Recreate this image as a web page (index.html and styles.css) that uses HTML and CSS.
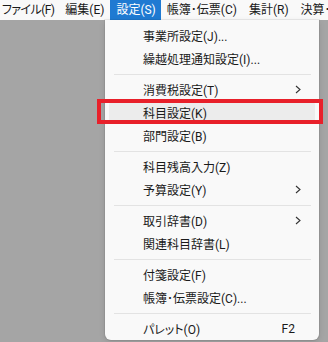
FILE: index.html
```html
<!DOCTYPE html>
<html lang="ja">
<head>
<meta charset="utf-8">
<link rel="stylesheet" href="styles.css">
</head>
<body>
<div class="app">
  <div class="menubar">
    <span class="mb-item first">ファイル(F)</span>
    <span class="mb-item">編集(E)</span>
    <span class="mb-item active">設定(S)</span>
    <span class="mb-item">帳簿･伝票(C)</span>
    <span class="mb-item">集計(R)</span>
    <span class="mb-item">決算･伝票</span>
  </div>
  <div class="workspace"></div>
  <div class="dropdown">
    <div class="row"><span class="label">事業所設定(J)...</span></div>
    <div class="row"><span class="label">繰越処理通知設定(I)...</span></div>
    <div class="sep"></div>
    <div class="row"><span class="label">消費税設定(T)</span><svg class="arrow" width="6" height="9" viewBox="0 0 6 9"><polyline points="1,1 5,4.5 1,8" fill="none" stroke="#333" stroke-width="1.1"/></svg></div>
    <div class="row hover"><span class="label">科目設定(K)</span></div>
    <div class="row"><span class="label">部門設定(B)</span></div>
    <div class="sep"></div>
    <div class="row"><span class="label">科目残高入力(Z)</span></div>
    <div class="row"><span class="label">予算設定(Y)</span><svg class="arrow" width="6" height="9" viewBox="0 0 6 9"><polyline points="1,1 5,4.5 1,8" fill="none" stroke="#333" stroke-width="1.1"/></svg></div>
    <div class="sep"></div>
    <div class="row"><span class="label">取引辞書(D)</span><svg class="arrow" width="6" height="9" viewBox="0 0 6 9"><polyline points="1,1 5,4.5 1,8" fill="none" stroke="#333" stroke-width="1.1"/></svg></div>
    <div class="row"><span class="label">関連科目辞書(L)</span></div>
    <div class="sep"></div>
    <div class="row"><span class="label">付箋設定(F)</span></div>
    <div class="row"><span class="label">帳簿･伝票設定(C)...</span></div>
    <div class="sep"></div>
    <div class="row"><span class="label">パレット(O)</span><span class="key">F2</span></div>
  </div>
  <div class="callout"></div>
</div>
</body>
</html>
```
FILE: styles.css
```css
html, body {
  margin: 0;
  padding: 0;
}
body {
  width: 328px;
  height: 342px;
  overflow: hidden;
  font-family: Roboto, "Noto Sans CJK JP", "Noto Sans", sans-serif;
  font-size: 12px;
  font-feature-settings: "palt";
  color: #1a1a1a;
}
.app {
  position: relative;
  width: 328px;
  height: 342px;
  display: flex;
  flex-direction: column;
}
.menubar {
  height: 20px;
  background: #f9f9f9;
  display: flex;
  align-items: stretch;
  white-space: nowrap;
  overflow: hidden;
}
.mb-item {
  display: flex;
  align-items: center;
  padding: 0 6px;
  line-height: 20px;
  flex-shrink: 0;
}
.mb-item.first {
  padding-left: 2px;
  padding-right: 5px;
  letter-spacing: -0.6px;
}
.mb-item.active {
  padding: 0 5px 0 6px;
  background: #1f7ad2;
  color: #ffffff;
}
.workspace {
  flex: 1;
  background: #a5a5a5;
}
.dropdown {
  position: absolute;
  left: 105px;
  top: 20px;
  width: 214px;
  height: 320px;
  box-sizing: border-box;
  padding-top: 4px;
  background: #f9f9f9;
  border-radius: 0 0 6px 6px;
  box-shadow: 0 0 0 1px rgba(0,0,0,0.06), 0 2px 6px rgba(0,0,0,0.12);
  display: flex;
  flex-direction: column;
}
.row {
  height: 23px;
  margin: 0 4px;
  padding: 0 14px 0 34px;
  border-radius: 4px;
  display: flex;
  align-items: center;
  justify-content: space-between;
  flex-shrink: 0;
}
.row.hover {
  background: #ececec;
}
.arrow {
  display: block;
}
.key {
  margin-right: 6px;
}
.sep {
  height: 8px;
  flex-shrink: 0;
  display: flex;
  align-items: center;
  margin: 0 8px 0 9px;
}
.sep::before {
  content: "";
  flex: 1;
  height: 1px;
  background: #e3e3e3;
}
.callout {
  position: absolute;
  left: 97px;
  top: 99px;
  width: 226px;
  height: 25px;
  box-sizing: border-box;
  border: 4px solid #e8202a;
}
```
